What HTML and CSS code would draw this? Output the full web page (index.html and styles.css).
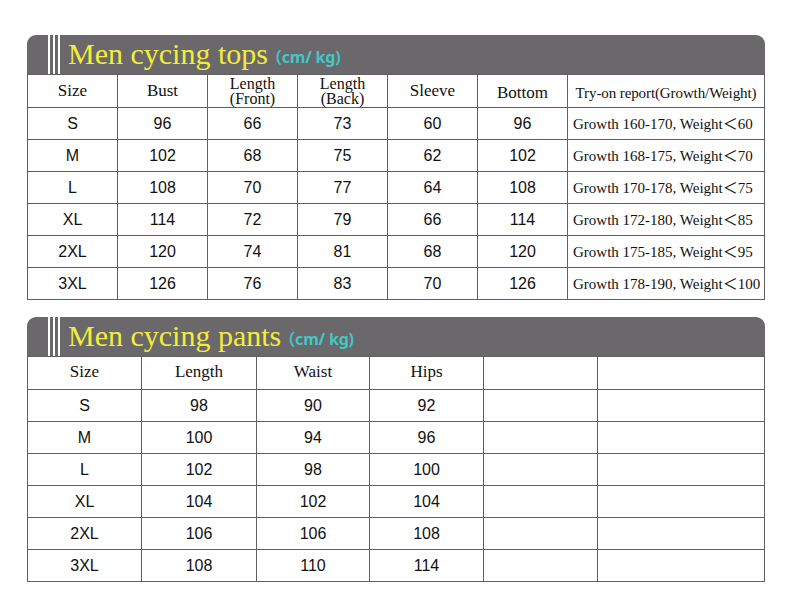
FILE: index.html
```html
<!DOCTYPE html>
<html>
<head>
<meta charset="utf-8">
<link rel="stylesheet" href="styles.css">
</head>
<body>
<div class="page">
  <section class="chart">
    <div class="bar">
      <span class="stripes"><i></i><i></i><i></i></span>
      <span class="title">Men cycing tops</span>
      <span class="unit">（cm/ kg)</span>
    </div>
    <table class="grid tops">
      <colgroup>
        <col class="c90"><col class="c90"><col class="c90"><col class="c90"><col class="c90"><col class="c90"><col>
      </colgroup>
      <tr class="head">
        <th>Size</th><th>Bust</th><th class="two">Length<br>(Front)</th><th class="two">Length<br>(Back)</th><th>Sleeve</th><th class="low">Bottom</th><th class="report">Try-on report(Growth/Weight)</th>
      </tr>
      <tr><td>S</td><td>96</td><td>66</td><td>73</td><td>60</td><td>96</td><td class="note">Growth 160-170, Weight＜60</td></tr>
      <tr><td>M</td><td>102</td><td>68</td><td>75</td><td>62</td><td>102</td><td class="note">Growth 168-175, Weight＜70</td></tr>
      <tr><td>L</td><td>108</td><td>70</td><td>77</td><td>64</td><td>108</td><td class="note">Growth 170-178, Weight＜75</td></tr>
      <tr><td>XL</td><td>114</td><td>72</td><td>79</td><td>66</td><td>114</td><td class="note">Growth 172-180, Weight＜85</td></tr>
      <tr><td>2XL</td><td>120</td><td>74</td><td>81</td><td>68</td><td>120</td><td class="note">Growth 175-185, Weight＜95</td></tr>
      <tr><td>3XL</td><td>126</td><td>76</td><td>83</td><td>70</td><td>126</td><td class="note">Growth 178-190, Weight＜100</td></tr>
    </table>
  </section>

  <section class="chart second">
    <div class="bar">
      <span class="stripes"><i></i><i></i><i></i></span>
      <span class="title">Men cycing pants</span>
      <span class="unit">（cm/ kg)</span>
    </div>
    <table class="grid pants">
      <colgroup>
        <col class="c114"><col class="c115"><col class="c113"><col class="c114"><col class="c114"><col>
      </colgroup>
      <tr class="head"><th>Size</th><th>Length</th><th>Waist</th><th>Hips</th><th></th><th></th></tr>
      <tr><td>S</td><td>98</td><td>90</td><td>92</td><td></td><td></td></tr>
      <tr><td>M</td><td>100</td><td>94</td><td>96</td><td></td><td></td></tr>
      <tr><td>L</td><td>102</td><td>98</td><td>100</td><td></td><td></td></tr>
      <tr><td>XL</td><td>104</td><td>102</td><td>104</td><td></td><td></td></tr>
      <tr><td>2XL</td><td>106</td><td>106</td><td>108</td><td></td><td></td></tr>
      <tr><td>3XL</td><td>108</td><td>110</td><td>114</td><td></td><td></td></tr>
    </table>
  </section>
</div>
</body>
</html>
```

FILE: styles.css
```css
html, body {
  margin: 0;
  padding: 0;
  background: #ffffff;
}

.page {
  padding: 35px 0 0 27px;
  width: 738px;
}

.chart.second {
  margin-top: 17px;
}

.bar {
  height: 39px;
  background: #6a686b;
  border-radius: 9px 9px 0 0;
  display: flex;
  align-items: baseline;
}

.stripes {
  display: flex;
  gap: 3px;
  margin-left: 21px;
  height: 39px;
  align-self: stretch;
}

.stripes i {
  display: block;
  width: 2px;
  background: #ffffff;
}

.title {
  margin-left: 8px;
  font-family: "Liberation Serif", "Times New Roman", serif;
  font-size: 30px;
  line-height: 39px;
  color: #f3ec3b;
  position: relative;
  top: -1px;
}

.unit {
  margin-left: -2px;
  font-family: "Noto Sans", "Noto Sans CJK SC", sans-serif;
  font-weight: 700;
  font-size: 16px;
  color: #43c6c7;
  letter-spacing: -0.2px;
  position: relative;
  top: -2px;
}

.grid {
  width: 738px;
  border-collapse: collapse;
  table-layout: fixed;
}

.grid td, .grid th {
  border: 1px solid #606060;
  padding: 0;
  text-align: center;
  color: #111111;
  white-space: nowrap;
  box-sizing: border-box;
}

.grid th {
  height: 33px;
  font-family: "Liberation Serif", "Times New Roman", serif;
  font-weight: normal;
  font-size: 17px;
  line-height: 20px;
  vertical-align: middle;
}

.grid td {
  height: 32px;
  font-family: "Liberation Sans", Arial, sans-serif;
  font-size: 16px;
  line-height: 20px;
}

.grid th.two {
  font-size: 16px;
  line-height: 14.5px;
  vertical-align: top;
  padding-top: 2px;
}

.grid th.low {
  padding-top: 3px;
}

.grid th.report {
  font-size: 15px;
  padding-top: 3px;
  letter-spacing: -0.1px;
}

.grid td.note {
  text-align: left;
  padding-left: 5px;
  font-family: "Liberation Serif", "Times New Roman", "Noto Sans CJK SC", serif;
  font-size: 15px;
}

.c90 { width: 90px; }
.c113 { width: 113px; }
.c114 { width: 114px; }
.c115 { width: 115px; }

.pants th {
  padding-bottom: 2px;
}
```
